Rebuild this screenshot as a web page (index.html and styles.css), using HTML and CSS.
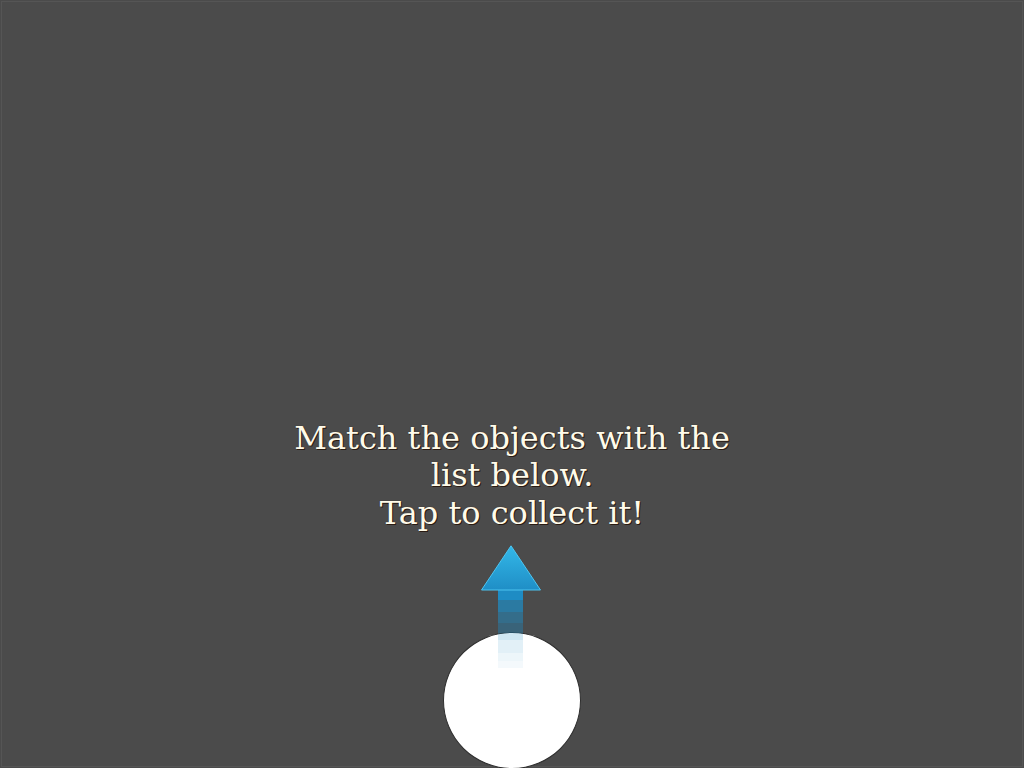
FILE: index.html
```html
<!DOCTYPE html>
<html lang="en">
<head>
<meta charset="utf-8">
<title>Match the objects</title>
<link rel="stylesheet" href="styles.css">
</head>
<body>
<main class="stage">
  <p class="hint">Match the objects with the<br>list below.<br>Tap to collect it!</p>
  <div class="target">
    <svg class="arrow" width="62" height="123" viewBox="0 0 62 123" aria-hidden="true">
      <defs>
        <linearGradient id="head" x1="0" y1="0" x2="0" y2="1">
          <stop offset="0" stop-color="#33b8e8"/>
          <stop offset="1" stop-color="#1f8ec6"/>
        </linearGradient>
      </defs>
      <rect x="18" y="44" width="25" height="11" fill="#1e8cc4"/>
      <rect x="18" y="55" width="25" height="12" fill="#1e8cc4" opacity="0.72"/>
      <rect x="18" y="67" width="25" height="11" fill="#1e8cc4" opacity="0.52"/>
      <rect x="18" y="78" width="25" height="10" fill="#1e8cc4" opacity="0.38"/>
      <rect x="18" y="88" width="25" height="7" fill="#1e8cc4" opacity="0.21"/>
      <rect x="18" y="95" width="25" height="13" fill="#1e8cc4" opacity="0.13"/>
      <rect x="18" y="108" width="25" height="8" fill="#1e8cc4" opacity="0.08"/>
      <rect x="18" y="116" width="25" height="7" fill="#1e8cc4" opacity="0.05"/>
      <polygon points="31,0.8 60.5,45 1.5,45" fill="url(#head)" stroke="#4cc4f0" stroke-width="1" stroke-linejoin="miter"/>
    </svg>
  </div>
</main>
</body>
</html>
```
FILE: styles.css
```css
html, body {
  margin: 0;
  padding: 0;
  background: #4b4b4b;
}

.stage {
  box-sizing: border-box;
  width: 1024px;
  height: 768px;
  overflow: hidden;
  background: #4b4b4b;
  outline: 1px solid #555555;
  outline-offset: -2px;
  display: flex;
  flex-direction: column;
  align-items: center;
  justify-content: flex-end;
}

.hint {
  margin: 0 0 100px;
  font-family: "DejaVu Serif", serif;
  font-size: 32px;
  line-height: 37.5px;
  color: #fffbea;
  text-align: center;
  text-shadow: 1px 1px 0 #2a1b12, 0 0 1px #3a2a20;
}

.target {
  position: relative;
  box-sizing: border-box;
  width: 138px;
  height: 137px;
  margin-bottom: -1px;
  border-radius: 50%;
  background: #ffffff;
  border: 1px solid #2e2e2e;
}

.arrow {
  position: absolute;
  left: 36px;
  top: -88px;
  display: block;
}
```
